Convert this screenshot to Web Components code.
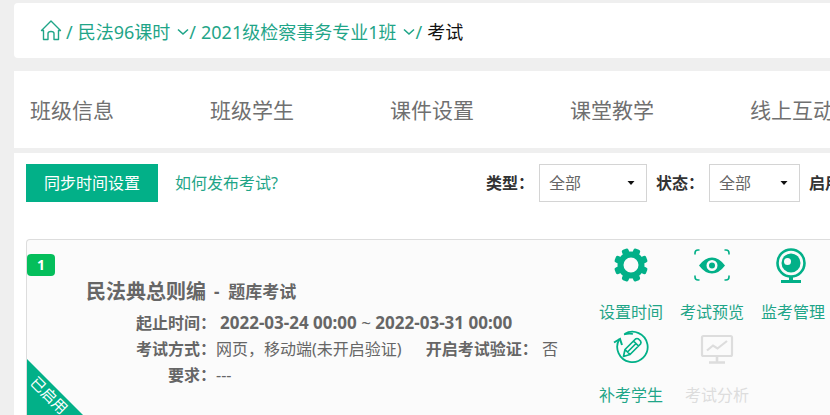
<!DOCTYPE html>
<html lang="zh-CN">
<head>
<meta charset="UTF-8">
<meta name="viewport" content="width=device-width, initial-scale=1.0">
<title>考试</title>
<style>
  :root {
    --green: #02b088;
    --link: #1fa588;
    --text: #666;
    --line: #ddd;
    --page: #efefef;
  }
  html, body {
    height: 100%;
  }
  body {
    background: var(--page);
    color: var(--text);
    font: 16px/26px "Noto Sans", "Open Sans", "Noto Sans CJK SC", sans-serif;
    margin: 0;
    overflow: hidden;
  }
</style>
</head>
<body>
<exam-page>
  <crumb-bar slot="crumbs">
    <crumb-item label="民法96课时" menu></crumb-item>
    <crumb-item label="2021级检察事务专业1班" menu></crumb-item>
    <crumb-item label="考试" current></crumb-item>
  </crumb-bar>
  <class-nav slot="nav" items="班级信息,班级学生,课件设置,课堂教学,线上互动"></class-nav>
  <exam-toolbar slot="toolbar">
    <filter-select label="类型：" name="type" size="wide"></filter-select>
    <filter-select label="状态：" name="status"></filter-select>
    <filter-select label="启用：" name="enabled"></filter-select>
  </exam-toolbar>
  <exam-card number="1" status="已启用">
    <span slot="name">民法典总则编</span>
    <span slot="kind">题库考试</span>
    <exam-action icon="gear" label="设置时间"></exam-action>
    <exam-action icon="eye" label="考试预览"></exam-action>
    <exam-action icon="camera" label="监考管理"></exam-action>
    <exam-action icon="retake" label="补考学生" slot="more"></exam-action>
    <exam-action icon="chart" label="考试分析" slot="more" disabled></exam-action>
  </exam-card>
</exam-page>

<script>
const TEETH = [22.5, 67.5, 112.5, 157.5, 202.5, 247.5, 292.5, 337.5]
  .map(angle => `<rect x="14.5" y="1" width="7" height="7" rx="2" transform="rotate(${angle} 18 18)"/>`)
  .join("");

const ICONS = {
  gear: `<svg width="36" height="36" viewBox="0 0 36 36" fill="currentColor" aria-hidden="true">
    <path fill-rule="evenodd" d="M18 4.500a13.500 13.500 0 1 0 0 27a13.500 13.500 0 0 0 0-27zM18 10.500a7.500 7.500 0 1 1 0 15a7.500 7.500 0 0 1 0-15z"/>
    ${TEETH}
  </svg>`,
  eye: `<svg width="36" height="36" viewBox="0 0 36 36" aria-hidden="true">
    <path d="M1 7.500V6q0-3 3-3h1.500M30.500 3H32q3 0 3 3v1.500M35 28.500V30q0 3-3 3h-1.500M5.500 33H4q-3 0-3-3v-1.500" fill="none" stroke="currentColor" stroke-width="1.600"/>
    <path fill="currentColor" fill-rule="evenodd" d="M5 18.500Q11 10.500 18 10.500T31 18.500Q25 26.500 18 26.500T5 18.500zM18 13a5.500 5.500 0 1 0 0 11a5.500 5.500 0 0 0 0-11z"/>
    <circle cx="18" cy="18.500" r="3" fill="currentColor"/>
  </svg>`,
  camera: `<svg width="36" height="36" viewBox="0 0 36 36" aria-hidden="true">
    <circle cx="16" cy="16" r="13.500" fill="none" stroke="currentColor" stroke-width="2.600"/>
    <circle cx="16" cy="16" r="9.500" fill="currentColor"/>
    <circle cx="12.500" cy="14.500" r="3.500" fill="#fbfbfb"/>
    <path fill="currentColor" d="M14 29h4v4h8v3H6v-3h8z"/>
  </svg>`,
  retake: `<svg width="36" height="36" viewBox="0 0 36 36" fill="none" stroke="currentColor" aria-hidden="true">
    <path stroke-width="1.800" d="M6.500 9A15.200 15.200 0 1 0 11.500 4M11 4.500q5-1.500 9-.500"/>
    <path stroke-width="2" d="M1 12.500L7 9l2 6"/>
    <path stroke-width="1.700" stroke-linejoin="round" d="M10.500 26.500l1.500-7L22.500 9q1.500-1 3 0l2 2q1 1.500 0 3L17 24.500zM12 19.500l5 5M20.500 11l5 5M14.500 22l8.500-8.500"/>
  </svg>`,
  chart: `<svg width="36" height="36" viewBox="0 0 36 36" fill="none" stroke="currentColor" aria-hidden="true">
    <rect x="3" y="6" width="30" height="20" rx="1.500" stroke-width="2.200"/>
    <path stroke-width="2.200" d="M8 20.500l6-5 4.500 3 9.500-7.500"/>
    <path stroke-width="2.600" d="M18 26v6M10 32.500h16"/>
  </svg>`
};

class ExamPage extends HTMLElement {
  connectedCallback() {
    this.attachShadow({ mode: "open" }).innerHTML = `
    <style>
    :host {
      display: flex;
      flex-direction: column;
      padding: 3px 0 0 14px;
    }
    main {
      background: #fff;
      display: flex;
      flex-direction: column;
      gap: 37px;
      margin-top: 5px;
      padding: 11px 0 0 12px;
    }
    </style>
    <slot name="crumbs"></slot>
    <slot name="nav"></slot>
    <main>
      <slot name="toolbar"></slot>
      <slot></slot>
    </main>
    `;
  }
}

class CrumbBar extends HTMLElement {
  connectedCallback() {
    this.attachShadow({ mode: "open" }).innerHTML = `
    <style>
    :host {
      background: #fff;
      border-radius: 4px 0 0 4px;
      display: block;
    }
    nav {
      align-items: center;
      color: var(--link);
      display: flex;
      padding: 15px 26px 12px;
      white-space: nowrap;
    }
    a {
      color: inherit;
      display: flex;
      margin: 0 4px 4px 0;
    }
    </style>
    <nav aria-label="位置">
      <a href="#" aria-label="首页">
        <svg width="22" height="22" viewBox="0 0 22 22" fill="none" stroke="currentColor" stroke-width="1.400" stroke-linejoin="round" stroke-linecap="round">
          <path d="M3.500 11.500H1.500L11 2l9.500 9.500h-2V20.500h-4.500v-6q0-2-3-2t-3 2v6H3.500z"/>
        </svg>
      </a>
      <slot></slot>
    </nav>
    `;
  }
}

class CrumbItem extends HTMLElement {
  connectedCallback() {
    const label = this.getAttribute("label");
    const text = this.hasAttribute("current")
      ? `<span class="current" aria-current="page">${label}</span>`
      : `<a href="#">${label}</a>`;
    const menu = this.hasAttribute("menu")
      ? `<button type="button" aria-label="切换">
          <svg width="12" height="8" viewBox="0 0 12 8" fill="none" stroke="currentColor" stroke-width="1.600"><path d="M1 1.500l5 4.500 5-4.500"/></svg>
        </button>`
      : "";
    this.attachShadow({ mode: "open" }).innerHTML = `
    <style>
    :host {
      align-items: center;
      display: flex;
      font-size: 18px;
      line-height: 28px;
    }
    a {
      color: inherit;
      text-decoration: none;
    }
    .separator {
      margin-right: 5px;
    }
    .current {
      color: #111;
    }
    button {
      background: none;
      border: 0;
      color: inherit;
      display: flex;
      margin-left: 7px;
      padding: 0;
    }
    </style>
    <span class="separator">/</span>${text}${menu}
    `;
  }
}

class ClassNav extends HTMLElement {
  connectedCallback() {
    const items = this.getAttribute("items").split(",");
    this.attachShadow({ mode: "open" }).innerHTML = `
    <style>
    :host {
      background: #fff;
      display: block;
      margin-top: 13px;
      overflow: hidden;
    }
    nav {
      display: flex;
      padding: 24px 0 23px 16px;
    }
    a {
      color: #707070;
      flex: 0 0 180px;
      font-size: 21px;
      line-height: 30px;
      text-decoration: none;
      white-space: nowrap;
    }
    </style>
    <nav aria-label="班级">${items.map(item => `<a href="#">${item}</a>`).join("")}</nav>
    `;
  }
}

class ExamToolbar extends HTMLElement {
  connectedCallback() {
    this.attachShadow({ mode: "open" }).innerHTML = `
    <style>
    :host {
      align-items: center;
      display: flex;
      overflow: hidden;
      white-space: nowrap;
    }
    button {
      background: var(--green);
      border: 0;
      color: #fff;
      flex: none;
      font: inherit;
      padding: 6px 18px;
    }
    a {
      color: var(--link);
      flex: none;
      margin-left: 17px;
      text-decoration: none;
    }
    .filters {
      display: flex;
      flex: none;
      gap: 9px;
      margin-left: 208px;
    }
    </style>
    <button type="button">同步时间设置</button>
    <a href="#">如何发布考试?</a>
    <div class="filters"><slot></slot></div>
    `;
  }
}

class FilterSelect extends HTMLElement {
  connectedCallback() {
    const name = this.getAttribute("name");
    this.attachShadow({ mode: "open" }).innerHTML = `
    <style>
    :host {
      align-items: center;
      display: flex;
      gap: 5px;
    }
    label {
      color: #333;
      font-weight: 700;
    }
    .box {
      align-items: center;
      border: 1px solid #d4d4d4;
      display: grid;
      width: 89px;
    }
    :host([size="wide"]) .box {
      width: 106px;
    }
    select, svg {
      grid-area: 1 / 1;
    }
    select {
      appearance: none;
      background: #fff;
      border: 0;
      border-radius: 0;
      color: #666;
      font: inherit;
      height: 36px;
      padding: 0 9px;
      width: 100%;
    }
    svg {
      justify-self: end;
      margin-right: 11px;
      pointer-events: none;
    }
    </style>
    <label for="${name}">${this.getAttribute("label")}</label>
    <div class="box">
      <select id="${name}"><option>全部</option></select>
      <svg width="8" height="5" viewBox="0 0 8 5" aria-hidden="true"><path d="M0.500 0h7L4 4z" fill="#111"/></svg>
    </div>
    `;
  }
}

class ExamCard extends HTMLElement {
  connectedCallback() {
    this.attachShadow({ mode: "open" }).innerHTML = `
    <style>
    :host {
      background: #fbfbfb;
      border: 1px solid var(--line);
      border-right: 0;
      border-radius: 4px 0 0 4px;
      display: flex;
      overflow: hidden;
      padding-bottom: 30px;
      position: relative;
    }
    .number {
      background: #04be5b;
      border-radius: 4px;
      color: #fff;
      font-size: 14px;
      font-weight: 700;
      left: 0;
      line-height: 22px;
      position: absolute;
      text-align: center;
      top: 14px;
      width: 28px;
    }
    .ribbon {
      align-items: center;
      background: var(--green);
      bottom: 0;
      box-sizing: border-box;
      clip-path: polygon(0 0, 100% 100%, 0 100%);
      color: #fff;
      display: flex;
      font-size: 15px;
      height: 80px;
      left: 0;
      padding-bottom: 8px;
      position: absolute;
      width: 80px;
    }
    .ribbon span {
      transform: rotate(45deg);
    }
    .info {
      flex: 1 1 auto;
      min-width: 500px;
      padding: 38px 0 0 59px;
      white-space: nowrap;
    }
    h2 {
      display: flex;
      font-size: 20px;
      gap: 8px;
      line-height: 28px;
      margin: 0 0 4px;
    }
    h2 small {
      font-size: 17px;
    }
    dl {
      display: grid;
      grid-template-columns: 130px auto;
      margin: 0;
    }
    dt {
      font-weight: 700;
      text-align: right;
    }
    dd {
      margin: 0;
    }
    .dates {
      font-size: 17px;
      padding-left: 4px;
    }
    .verify {
      margin-left: 20px;
    }
    .actions {
      display: flex;
      flex: none;
      flex-direction: column;
      gap: 2px;
      padding: 5px 5px 0 0;
    }
    .row {
      display: flex;
      gap: 17px;
    }
    .row + .row {
      gap: 22px;
    }
    </style>
    <div class="number">${this.getAttribute("number")}</div>
    <div class="info">
      <h2><slot name="name"></slot><small>-&nbsp; <slot name="kind"></slot></small></h2>
      <dl>
        <dt>起止时间：</dt>
        <dd class="dates"><b>2022-03-24 00:00</b> ~ <b>2022-03-31 00:00</b></dd>
        <dt>考试方式：</dt>
        <dd>网页，移动端(未开启验证) <b class="verify">开启考试验证：</b> 否</dd>
        <dt>要求：</dt>
        <dd>---</dd>
      </dl>
    </div>
    <div class="actions">
      <div class="row"><slot></slot></div>
      <div class="row"><slot name="more"></slot></div>
    </div>
    <div class="ribbon"><span>${this.getAttribute("status")}</span></div>
    `;
  }
}

class ExamAction extends HTMLElement {
  connectedCallback() {
    const disabled = this.hasAttribute("disabled") ? "disabled" : "";
    this.attachShadow({ mode: "open" }).innerHTML = `
    <style>
    :host {
      display: block;
    }
    button {
      align-items: center;
      background: none;
      border: 0;
      color: var(--green);
      display: flex;
      flex-direction: column;
      font: inherit;
      gap: 16px;
      padding: 2px 0 1px;
    }
    span {
      color: var(--link);
      white-space: nowrap;
    }
    button:disabled, button:disabled span {
      color: #ddd;
    }
    </style>
    <button type="button" ${disabled}>${ICONS[this.getAttribute("icon")]}<span>${this.getAttribute("label")}</span></button>
    `;
  }
}

customElements.define("exam-page", ExamPage);
customElements.define("crumb-bar", CrumbBar);
customElements.define("crumb-item", CrumbItem);
customElements.define("class-nav", ClassNav);
customElements.define("exam-toolbar", ExamToolbar);
customElements.define("filter-select", FilterSelect);
customElements.define("exam-card", ExamCard);
customElements.define("exam-action", ExamAction);
</script>
</body>
</html>
